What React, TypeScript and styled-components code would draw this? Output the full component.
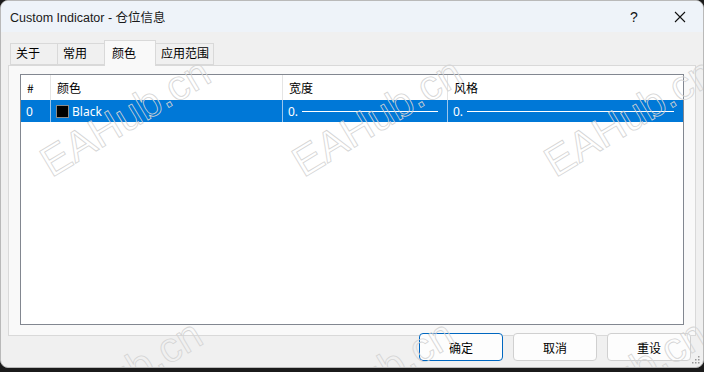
import styled, { createGlobalStyle } from 'styled-components'

const Global = createGlobalStyle`
  html, body {
    margin: 0;
    padding: 0;
    background: #1b1b1b;
  }
  body {
    font-family: "Liberation Sans", "Noto Sans CJK SC", sans-serif;
    font-size: 12px;
    color: #000;
  }
`

const Window = styled.div`
  position: relative;
  width: 704px;
  height: 368px;
  box-sizing: border-box;
  border: 1px solid #b9b9b9;
  border-radius: 8px;
  background: #f0f0f0;
  overflow: hidden;
  display: flex;
  flex-direction: column;
`

const TitleBar = styled.div`
  height: 31px;
  flex: none;
  display: flex;
  align-items: center;
  background: #eef3f9;
  padding-left: 9px;
`

const Title = styled.div`
  flex: 1;
  font-size: 12.5px;
  color: #1a1a1a;
`

const TitleButton = styled.div`
  width: 46px;
  height: 31px;
  display: flex;
  align-items: center;
  justify-content: center;
  color: #111;
  font-size: 14px;
`

const Body = styled.div`
  flex: 1;
  display: flex;
  flex-direction: column;
  padding: 7px 7px 0 7px;
`

const Tabs = styled.div`
  display: flex;
  align-items: flex-end;
  height: 26px;
  padding-left: 2px;
`

const Tab = styled.div<{ $active?: boolean }>`
  height: ${p => (p.$active ? 26 : 22)}px;
  min-width: ${p => (p.$active ? 52 : 48)}px;
  box-sizing: border-box;
  padding: ${p => (p.$active ? 4 : 1)}px 4px 0 ${p => (p.$active ? 7 : 5)}px;
  margin: 0 0 ${p => (p.$active ? -1 : 0)}px -1px;
  line-height: 16px;
  border: 1px solid #d9d9d9;
  border-bottom: ${p => (p.$active ? 'none' : '1px solid #d9d9d9')};
  background: ${p => (p.$active ? '#f9f9f9' : '#f0f0f0')};
  position: relative;
  z-index: ${p => (p.$active ? 1 : 0)};
  font-family: "Noto Sans CJK SC", sans-serif;
  font-size: 12px;
  &:first-child {
    margin-left: 0;
  }
`

const Panel = styled.div`
  height: 271px;
  box-sizing: border-box;
  border: 1px solid #d9d9d9;
  background: #f9f9f9;
  padding: 8px 11px 10px 11px;
  display: flex;
`

const Table = styled.div`
  flex: 1;
  border: 1px solid #828790;
  background: #fff;
  display: flex;
  flex-direction: column;
`

const cols = '30px 232px 165px 1fr'

const HeaderRow = styled.div`
  display: grid;
  grid-template-columns: ${cols};
  height: 25px;
`

const HeaderCell = styled.div`
  display: flex;
  align-items: center;
  padding-left: 6px;
  border-right: 1px solid #e5e5e5;
  font-family: "Noto Sans CJK SC", sans-serif;
  font-size: 12px;
  &:last-child {
    border-right: none;
  }
`

const DataRow = styled.div<{ $selected?: boolean }>`
  display: grid;
  grid-template-columns: ${cols};
  height: 22px;
  background: ${p => (p.$selected ? '#0078d7' : '#fff')};
  color: ${p => (p.$selected ? '#fff' : '#000')};
`

const Cell = styled.div`
  display: flex;
  align-items: center;
  padding-left: 5px;
  border-right: 1px solid #9cc6ec;
  font-family: "Noto Sans", "Noto Sans CJK SC", sans-serif;
  font-size: 12px;
  gap: 2px;
  &:last-child {
    border-right: none;
  }
`

const Swatch = styled.span<{ $color: string }>`
  width: 11px;
  height: 11px;
  border: 1px solid #8a8a8a;
  background: ${p => p.$color};
  margin-right: 1px;
`

const Line = styled.span`
  flex: 1;
  height: 1px;
  background: #fff;
  margin: 0 9px 0 2px;
`

const Footer = styled.div`
  flex: 1;
  display: flex;
  justify-content: flex-end;
  align-items: flex-start;
  gap: 10px;
  padding: 0 5px 0 0;
  margin-top: -3px;
`

const Button = styled.div<{ $primary?: boolean }>`
  width: 84px;
  height: 28px;
  box-sizing: border-box;
  border: 1px solid ${p => (p.$primary ? '#0067c0' : '#d0d0d0')};
  border-radius: 4px;
  background: #fdfdfd;
  display: flex;
  align-items: center;
  justify-content: center;
  font-family: "Noto Sans CJK SC", sans-serif;
  font-size: 12px;
  position: relative;
  z-index: 2;
`

const Grip = styled.svg`
  position: absolute;
  right: 2px;
  bottom: 2px;
`

const Watermark = styled.span`
  position: absolute;
  font-family: "Liberation Sans", sans-serif;
  font-size: 42px;
  line-height: 1;
  color: transparent;
  -webkit-text-stroke: 0.8px #d4d4d4;
  transform-origin: 0 100%;
  transform: rotate(-31deg);
  pointer-events: none;
  white-space: nowrap;
  z-index: 5;
`

const marks = [
  [54, 141], [306, 141], [558, 141],
  [46, 403], [298, 403], [550, 403],
]

export default function App() {
  return (
    <>
      <Global />
      <Window>
        <TitleBar>
          <Title>Custom Indicator - 仓位信息</Title>
          <TitleButton>?</TitleButton>
          <TitleButton>
            <svg width="12" height="12" viewBox="0 0 12 12">
              <path d="M1 1 L11 11 M11 1 L1 11" stroke="#111" strokeWidth="1.1" />
            </svg>
          </TitleButton>
        </TitleBar>
        <Body>
          <Tabs>
            <Tab>关于</Tab>
            <Tab>常用</Tab>
            <Tab $active>颜色</Tab>
            <Tab>应用范围</Tab>
          </Tabs>
          <Panel>
            <Table>
              <HeaderRow>
                <HeaderCell>#</HeaderCell>
                <HeaderCell>颜色</HeaderCell>
                <HeaderCell>宽度</HeaderCell>
                <HeaderCell>风格</HeaderCell>
              </HeaderRow>
              <DataRow $selected>
                <Cell>0</Cell>
                <Cell>
                  <Swatch $color="#000" />
                  Black
                </Cell>
                <Cell>
                  0.
                  <Line />
                </Cell>
                <Cell>
                  0.
                  <Line />
                </Cell>
              </DataRow>
            </Table>
          </Panel>
          <Footer>
            <Button $primary>确定</Button>
            <Button>取消</Button>
            <Button>重设</Button>
          </Footer>
        </Body>
        <Grip width="10" height="10" viewBox="0 0 10 10">
          {[
            [8, 2], [8, 5], [8, 8], [5, 5], [5, 8], [2, 8],
          ].map(([x, y]) => (
            <rect key={`${x}-${y}`} x={x - 1} y={y - 1} width="1.5" height="1.5" fill="#999" />
          ))}
        </Grip>
        {marks.map(([x, y]) => (
          <Watermark key={`${x}-${y}`} style={{ left: x, top: y }}>
            EAHub.cn
          </Watermark>
        ))}
      </Window>
    </>
  )
}
